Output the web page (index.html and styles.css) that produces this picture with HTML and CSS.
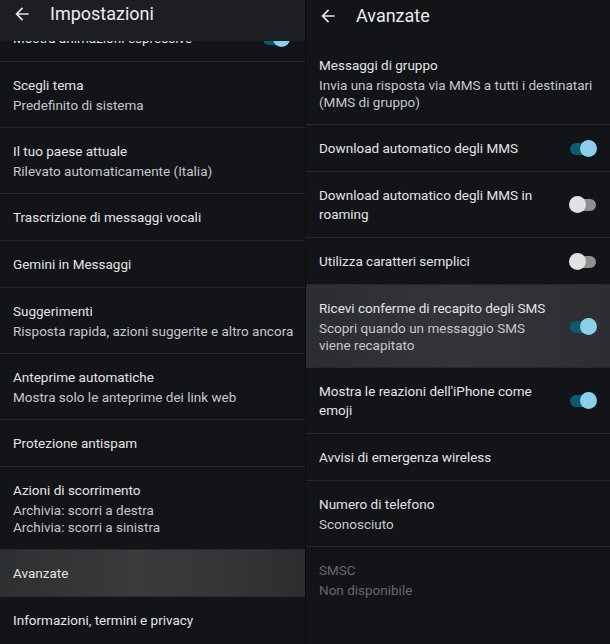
FILE: index.html
```html
<!DOCTYPE html>
<html lang="it">
<head>
<meta charset="utf-8">
<title>Impostazioni</title>
<link rel="stylesheet" href="styles.css">
</head>
<body>
<div class="screen">
  <section class="panel panel-left">
    <header class="appbar appbar-raised">
      <svg class="back" viewBox="0 0 24 24" width="20" height="20"><path d="M20 11H7.83l5.59-5.59L12 4l-8 8 8 8 1.41-1.41L7.83 13H20v-2z" fill="currentColor"/></svg>
      <h1 class="appbar-title">Impostazioni</h1>
    </header>
    <div class="viewport">
      <ul class="list list-scrolled">
        <li class="item">
          <div class="texts"><div class="title">Mostra animazioni espressive</div></div>
          <span class="toggle on"><span class="track"></span><span class="thumb"></span></span>
        </li>
        <li class="item">
          <div class="texts"><div class="title">Scegli tema</div><div class="sub">Predefinito di sistema</div></div>
        </li>
        <li class="item">
          <div class="texts"><div class="title">Il tuo paese attuale</div><div class="sub">Rilevato automaticamente (Italia)</div></div>
        </li>
        <li class="item">
          <div class="texts"><div class="title">Trascrizione di messaggi vocali</div></div>
        </li>
        <li class="item">
          <div class="texts"><div class="title">Gemini in Messaggi</div></div>
        </li>
        <li class="item">
          <div class="texts"><div class="title">Suggerimenti</div><div class="sub">Risposta rapida, azioni suggerite e altro ancora</div></div>
        </li>
        <li class="item">
          <div class="texts"><div class="title">Anteprime automatiche</div><div class="sub">Mostra solo le anteprime dei link web</div></div>
        </li>
        <li class="item">
          <div class="texts"><div class="title">Protezione antispam</div></div>
        </li>
        <li class="item">
          <div class="texts"><div class="title">Azioni di scorrimento</div><div class="sub">Archivia: scorri a destra<br>Archivia: scorri a sinistra</div></div>
        </li>
        <li class="item item-active">
          <div class="texts"><div class="title">Avanzate</div></div>
        </li>
        <li class="item">
          <div class="texts"><div class="title">Informazioni, termini e privacy</div></div>
        </li>
      </ul>
    </div>
  </section>
  <section class="panel panel-right">
    <header class="appbar appbar-flat">
      <svg class="back" viewBox="0 0 24 24" width="20" height="20"><path d="M20 11H7.83l5.59-5.59L12 4l-8 8 8 8 1.41-1.41L7.83 13H20v-2z" fill="currentColor"/></svg>
      <h1 class="appbar-title">Avanzate</h1>
    </header>
    <div class="viewport">
      <ul class="list">
        <li class="item">
          <div class="texts"><div class="title">Messaggi di gruppo</div><div class="sub">Invia una risposta via MMS a tutti i destinatari (MMS di gruppo)</div></div>
        </li>
        <li class="item">
          <div class="texts narrow"><div class="title">Download automatico degli MMS</div></div>
          <span class="toggle on"><span class="track"></span><span class="thumb"></span></span>
        </li>
        <li class="item">
          <div class="texts narrow"><div class="title">Download automatico degli MMS in roaming</div></div>
          <span class="toggle off"><span class="track"></span><span class="thumb"></span></span>
        </li>
        <li class="item">
          <div class="texts narrow"><div class="title">Utilizza caratteri semplici</div></div>
          <span class="toggle off"><span class="track"></span><span class="thumb"></span></span>
        </li>
        <li class="item item-pressed">
          <div class="texts narrow"><div class="title">Ricevi conferme di recapito degli SMS</div><div class="sub">Scopri quando un messaggio SMS viene recapitato</div></div>
          <span class="toggle on"><span class="track"></span><span class="thumb"></span></span>
        </li>
        <li class="item">
          <div class="texts narrow"><div class="title">Mostra le reazioni dell'iPhone come emoji</div></div>
          <span class="toggle on"><span class="track"></span><span class="thumb"></span></span>
        </li>
        <li class="item">
          <div class="texts"><div class="title">Avvisi di emergenza wireless</div></div>
        </li>
        <li class="item">
          <div class="texts"><div class="title">Numero di telefono</div><div class="sub">Sconosciuto</div></div>
        </li>
        <li class="item item-disabled">
          <div class="texts"><div class="title">SMSC</div><div class="sub">Non disponibile</div></div>
        </li>
      </ul>
    </div>
  </section>
</div>
</body>
</html>
```

FILE: styles.css
```css
* { box-sizing: border-box; }
html, body {
  margin: 0;
  padding: 0;
  background: #121417;
}
body {
  width: 610px;
  height: 644px;
  overflow: hidden;
  font-family: Roboto, "Noto Sans", "Liberation Sans", sans-serif;
  color: #e4e4e5;
}
.screen {
  display: flex;
  width: 610px;
  height: 644px;
}
.panel {
  display: flex;
  flex-direction: column;
  height: 644px;
  background: #121417;
  overflow: hidden;
}
.panel-left { width: 305px; }
.panel-right { width: 305px; border-left: 1px solid #0b0c0e; }

.appbar {
  display: flex;
  align-items: center;
  height: 41px;
  flex: none;
  padding: 0 0 12px 12px;
  position: relative;
  z-index: 1;
}
.appbar-raised { background: #1d1e21; padding-bottom: 13px; }
.appbar-flat { background: #121417; height: 42px; padding-bottom: 11px; }
.back { color: #e4e4e5; flex: none; }
.appbar-title {
  margin: 0 0 0 18px;
  font-size: 18px;
  font-weight: 400;
  line-height: 24px;
  color: #ececec;
}

.viewport {
  flex: 1;
  overflow: hidden;
}
.list {
  list-style: none;
  margin: 0;
  padding: 0;
}
.list-scrolled { margin-top: -26px; }

.item {
  display: flex;
  align-items: center;
  padding: 14px 13px 13px 13px;
  border-bottom: 1px solid #26282b;
}
.panel-left .item { padding-right: 6px; }
.item:last-child { border-bottom: none; }
.item-active {
  background: linear-gradient(90deg, #2d2f31 0%, #3a3b3d 45%, #343537 75%, #2b2d2f 100%);
  border-bottom-color: #2b2d2f;
}
.item-pressed {
  background: linear-gradient(90deg, #2b2d30 0%, #333538 50%, #2c2e31 100%);
}
.texts { flex: 1; min-width: 0; }
.texts.narrow { flex: none; width: 232px; }
.title {
  font-size: 13.5px;
  line-height: 19px;
  color: #e4e4e5;
}
.sub {
  margin-top: 2px;
  font-size: 13.5px;
  line-height: 17px;
  color: #c6c7c9;
}
.item-disabled .title,
.item-disabled .sub { color: #66686b; }

.toggle {
  position: relative;
  flex: none;
  width: 28px;
  height: 18px;
  margin-left: auto;
}
.panel-left .toggle { margin-right: 9px; }
.track {
  position: absolute;
  left: 1px;
  right: 4px;
  top: 3px;
  height: 12px;
  border-radius: 6px;
}
.thumb {
  position: absolute;
  top: 0;
  width: 17px;
  height: 17px;
  border-radius: 50%;
}
.toggle.on .track { background: #0e5a6f; }
.toggle.on .thumb { right: 0; background: #8ccfea; }
.toggle.off .track { background: #8e8f91; left: 8px; right: 1px; }
.toggle.off .thumb { left: 0; background: #e2e2e3; }
```
